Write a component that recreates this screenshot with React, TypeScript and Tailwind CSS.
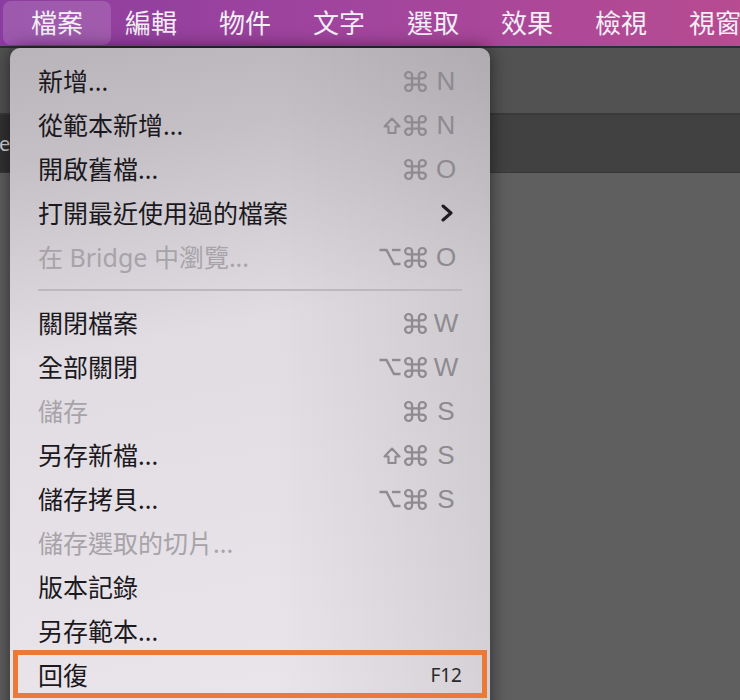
import React from "react";

const FONT = { fontFamily: '"Noto Sans", "Noto Sans CJK TC", sans-serif' };

function Cmd() {
  return (
    <svg width="23" height="21" viewBox="2 2 20 20" fill="none" stroke="currentColor" strokeWidth="2" strokeLinecap="round" strokeLinejoin="round" preserveAspectRatio="none">
      <path d="M15 6v12a3 3 0 1 0 3-3H6a3 3 0 1 0 3 3V6a3 3 0 1 0-3 3h12a3 3 0 1 0-3-3" />
    </svg>
  );
}

function Shift() {
  return (
    <svg width="18" height="17" viewBox="0 0 18 17" fill="none" stroke="currentColor" strokeWidth="2.1" strokeLinejoin="round">
      <path d="M5.5 16V9.5H1.5L9 1.5 16.5 9.5H12.5V16H5.5z" />
    </svg>
  );
}

function Opt() {
  return (
    <svg width="22" height="18" viewBox="0 0 22 18" fill="none" stroke="currentColor" strokeWidth="2.4" strokeLinejoin="miter">
      <path d="M0.5 2h7l7.5 14h6.5" />
      <path d="M13 2h8.5" />
    </svg>
  );
}

type Mod = "shift" | "opt" | "cmd";
type Item = {
  label: string;
  disabled?: boolean;
  mods?: Mod[];
  keyChar?: string;
  sub?: boolean;
};

const top: Item[] = [
  { label: "新增...", mods: ["cmd"], keyChar: "N" },
  { label: "從範本新增...", mods: ["shift", "cmd"], keyChar: "N" },
  { label: "開啟舊檔...", mods: ["cmd"], keyChar: "O" },
  { label: "打開最近使用過的檔案", sub: true },
  { label: "在 Bridge 中瀏覽...", disabled: true, mods: ["opt", "cmd"], keyChar: "O" },
];

const bottom: Item[] = [
  { label: "關閉檔案", mods: ["cmd"], keyChar: "W" },
  { label: "全部關閉", mods: ["opt", "cmd"], keyChar: "W" },
  { label: "儲存", disabled: true, mods: ["cmd"], keyChar: "S" },
  { label: "另存新檔...", mods: ["shift", "cmd"], keyChar: "S" },
  { label: "儲存拷貝...", mods: ["opt", "cmd"], keyChar: "S" },
  { label: "儲存選取的切片...", disabled: true },
  { label: "版本記錄" },
  { label: "另存範本..." },
];

function Row({ item }: { item: Item }) {
  return (
    <div className="flex h-[44px] items-center pl-[28px] pr-[31px]">
      <div className={`flex-1 text-[25px] leading-none ${item.disabled ? "text-[#a7a3a9]" : "text-[#1b191d]"}`}>
        {item.label}
      </div>
      {item.mods && (
        <div className="flex items-center text-[#8e8a90]">
          <div className="flex items-center gap-[3px]">
            {item.mods.map((m, i) =>
              m === "cmd" ? <Cmd key={i} /> : m === "shift" ? <Shift key={i} /> : <Opt key={i} />
            )}
          </div>
          <div
            className="ml-[6px] w-[26px] text-center text-[26px] leading-none"
            style={{ fontFamily: '"Liberation Sans", Arial, sans-serif' }}
          >
            {item.keyChar}
          </div>
        </div>
      )}
      {item.sub && (
        <svg width="12" height="18" viewBox="0 0 12 18" fill="none" stroke="#1d1b1f" strokeWidth="3" strokeLinecap="round" strokeLinejoin="round" className="mr-[6px]">
          <path d="M2 2l8 7-8 7" />
        </svg>
      )}
    </div>
  );
}

export default function App() {
  const menus = ["檔案", "編輯", "物件", "文字", "選取", "效果", "檢視", "視窗"];
  return (
    <div className="relative h-[700px] w-[740px] overflow-hidden bg-[#5f5f5f]" style={FONT}>
      <div className="flex h-[46px] items-center gap-[42px] whitespace-nowrap bg-[linear-gradient(to_right,#8b3d9f,#a2459d_50%,#b84b91)] pl-[31px]">
        {menus.map((m, i) => (
          <div
            key={m}
            className={`w-[52px] shrink-0 text-[26px] leading-none text-[#f4eef6] ${
              i === 0 ? "mx-[-28px] flex h-[44px] w-[108px] items-center rounded-lg bg-white/15 px-[28px]" : ""
            }`}
          >
            {m}
          </div>
        ))}
      </div>
      <div className="h-[2px] bg-[#2e2e2e]" />
      <div className="h-[67px] border-b-2 border-[#3a3a3a] bg-[#525252]" />
      <div className="flex h-[58px] items-center border-b border-[#383838] bg-[#414141]">
        <div className="flex h-full items-center bg-[#323232] pr-[20px] text-[20px] text-[#d8d8d8]">
          <span className="ml-[-1px]">er</span>
        </div>
      </div>

      <div className="absolute left-[10px] top-[48px] h-[700px] w-[480px] rounded-t-[10px] bg-[image:linear-gradient(to_right,rgba(0,0,0,0)_55%,rgba(0,0,0,0.09)),linear-gradient(170deg,#b8b4ba_0%,#c4c0c6_15%,#e0dce1_40%,#ebe7ec_100%)] pt-[11px] shadow-[0_0_18px_rgba(0,0,0,0.55)]">
        {top.map((it) => (
          <Row key={it.label} item={it} />
        ))}
        <div className="flex h-[22px] items-center px-[28px]">
          <div className="h-[2px] w-full bg-[#bcb8bd]" />
        </div>
        {bottom.map((it) => (
          <Row key={it.label} item={it} />
        ))}
        <div className="relative flex h-[44px] items-center pl-[28px] pr-[28px]">
          <div className="flex-1 text-[25px] leading-none text-[#1b191d]">回復</div>
          <div className="text-[19px] leading-none text-[#2a282b]">F12</div>
          <div className="absolute left-[3px] right-[3px] top-[-3px] h-[48px] border-[5px] border-[#ec7935]" />
        </div>
      </div>
    </div>
  );
}
